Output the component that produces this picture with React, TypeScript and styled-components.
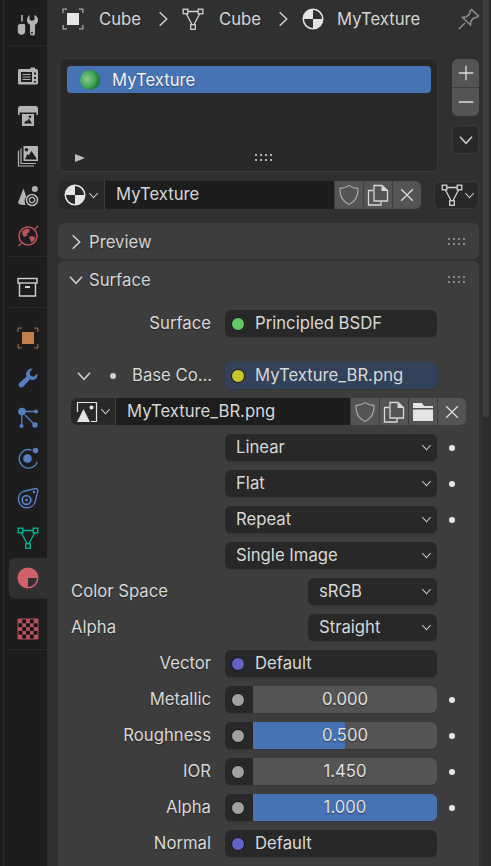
import styled, { createGlobalStyle } from "styled-components";
import type { ReactNode } from "react";

const GlobalStyle = createGlobalStyle`
  html, body { margin: 0; padding: 0; background: #303030; }
  body { font-family: Inter, "Noto Sans", sans-serif; color: #e0e0e0; }
`;

const FONT_SIZE = "16.7px";

const Screen = styled.div`
  display: flex;
  width: 491px;
  height: 866px;
  overflow: hidden;
  background: #303030;
`;

/* left tab column */
const Sidebar = styled.nav`
  width: 47px;
  flex: none;
  box-sizing: border-box;
  padding: 5px 0 0 9px;
  background: #1d1d1d;
  box-shadow: inset 3px 0 0 #1d1d1d, inset 4px 0 0 #2b2b2b;
  display: flex;
  flex-direction: column;
`;
const TabGroup = styled.div`
  display: flex;
  flex-direction: column;
  border-bottom: 1px solid #282828;
  margin-bottom: 10px;
`;
const Tab = styled.div<{ $active?: boolean }>`
  height: 40px;
  display: flex;
  align-items: center;
  justify-content: center;
  border-radius: 5px 0 0 5px;
  background: ${(p) => (p.$active ? "#303030" : "transparent")};
`;

const Main = styled.main`
  width: 436px;
  flex: none;
  padding-left: 11px;
  box-sizing: border-box;
  display: flex;
  flex-direction: column;
  & > * { flex: none; }
`;

/* breadcrumb */
const Header = styled.header`
  height: 38px;
  display: flex;
  align-items: center;
  padding-left: 4px;
  font-size: ${FONT_SIZE};
  color: #d4d4d4;
`;
const Crumb = styled.span`
  margin-left: 15px;
  width: 56px;
`;
const CrumbChevron = styled.span`
  display: flex;
  width: 27px;
`;
const CrumbEnd = styled.span`
  margin-left: 13px;
  flex: 1;
`;
const PinSlot = styled.span`
  display: flex;
  margin-right: 3px;
`;

/* material slots */
const SlotRow = styled.section`
  margin-top: 20px;
  display: flex;
`;
const SlotList = styled.div`
  position: relative;
  width: 379px;
  height: 114px;
  margin-left: 1px;
  box-sizing: border-box;
  padding: 7px 6px 7px 7px;
  background: #282828;
  border: 1px solid #3a3a3a;
  border-radius: 6px;
`;
const SlotItem = styled.div`
  height: 27px;
  display: flex;
  align-items: center;
  gap: 12px;
  padding-left: 13px;
  background: #4772b3;
  border-radius: 4px;
  font-size: ${FONT_SIZE};
  color: #f2f2f2;
  text-shadow: 0 1px 1px rgba(0, 0, 0, 0.35);
`;
const Sphere = styled.span`
  width: 20px;
  height: 20px;
  border-radius: 50%;
  background: radial-gradient(circle at 36% 45%, #90c594 0, #3fa552 48%, #11692b 78%, #0a3417 100%);
`;
const ExpandMark = styled.span`
  position: absolute;
  left: 15px;
  bottom: 9px;
  width: 0;
  height: 0;
  border-left: 10px solid #bdbdbd;
  border-top: 4px solid transparent;
  border-bottom: 4px solid transparent;
`;
const GripHolder = styled.span`
  position: absolute;
  left: 195px;
  bottom: 9px;
  display: flex;
`;
const SlotTools = styled.div`
  margin-left: 14px;
  width: 27px;
  display: flex;
  flex-direction: column;
`;
const PlusMinus = styled.div`
  height: 57px;
  margin-top: 1px;
  border-radius: 6px;
  overflow: hidden;
  background: #545454;
  display: flex;
  flex-direction: column;
`;
const PlusMinusCell = styled.span`
  flex: 1;
  display: flex;
  align-items: center;
  justify-content: center;
  & + & { border-top: 1px solid #3d3d3d; }
`;
const SpecialsButton = styled.div`
  height: 29px;
  margin-top: 9px;
  background: #282828;
  border: 1px solid #3a3a3a;
  border-radius: 6px;
  box-sizing: border-box;
  display: flex;
  align-items: center;
  justify-content: center;
`;

/* ID selector rows */
const IdRow = styled.section`
  margin-top: 9px;
  margin-left: 1px;
  display: flex;
  height: 28px;
`;
const IdField = styled.div<{ $width: number }>`
  width: ${(p) => p.$width}px;
  height: 100%;
  flex: none;
  display: flex;
  border-radius: 6px;
  overflow: hidden;
`;
const IdIcon = styled.span<{ $width: number }>`
  width: ${(p) => p.$width}px;
  flex: none;
  box-sizing: border-box;
  display: flex;
  align-items: center;
  gap: 2px;
  padding-left: 5px;
  background: #282828;
  border-right: 1px solid #3d3d3d;
`;
const IdInput = styled.span`
  flex: 1;
  display: flex;
  align-items: center;
  padding: 0 0 2px 11px;
  background: #1d1d1d;
  font-size: ${FONT_SIZE};
  color: #d6d6d6;
`;
const IdButton = styled.span`
  width: 29px;
  flex: none;
  box-sizing: border-box;
  display: flex;
  align-items: center;
  justify-content: center;
  background: #545454;
  border-left: 1px solid #3d3d3d;
`;
const MeshSelect = styled.div`
  margin-left: 13px;
  width: 45px;
  box-sizing: border-box;
  display: flex;
  align-items: center;
  gap: 1px;
  padding-left: 6px;
  background: #282828;
  border: 1px solid #3a3a3a;
  border-radius: 6px;
`;

/* panels */
const PanelStack = styled.div`
  margin-top: 14px;
  width: 421px;
  display: flex;
  flex-direction: column;
  gap: 2px;
`;
const Panel = styled.section`
  background: #3d3d3d;
  border-radius: 6px;
`;
const PanelHeader = styled.div<{ $height: number; $drop?: number }>`
  height: ${(p) => p.$height}px;
  box-sizing: border-box;
  display: flex;
  align-items: center;
  padding: ${(p) => p.$drop ?? 0}px 14px 0 10px;
  font-size: ${FONT_SIZE};
  color: #d4d4d4;
  text-shadow: 0 1px 1px rgba(0, 0, 0, 0.4);
`;
const PanelTitle = styled.span`
  flex: 1;
  margin-left: 5px;
`;
const PanelBody = styled.div`
  padding: 11px 0 20px 13px;
  display: flex;
  flex-direction: column;
  gap: 9px;
`;

const Row = styled.div<{ $top?: number }>`
  display: flex;
  align-items: center;
  height: 27px;
  margin-top: ${(p) => p.$top ?? 0}px;
`;
const Label = styled.span<{ $width?: number }>`
  width: ${(p) => p.$width ?? 140}px;
  flex: none;
  padding-bottom: 2px;
  text-align: right;
  font-size: ${FONT_SIZE};
  color: #d8d8d8;
  text-shadow: 0 1px 1px rgba(0, 0, 0, 0.45);
  white-space: nowrap;
`;
const PlainLabel = styled.span`
  width: 237px;
  flex: none;
  padding-bottom: 2px;
  font-size: ${FONT_SIZE};
  color: #d8d8d8;
  text-shadow: 0 1px 1px rgba(0, 0, 0, 0.45);
`;
const FieldBase = styled.div<{ $width?: number; $left?: number }>`
  width: ${(p) => p.$width ?? 212}px;
  margin-left: ${(p) => p.$left ?? 14}px;
  height: 27px;
  flex: none;
  box-sizing: border-box;
  display: flex;
  align-items: center;
  border-radius: 6px;
  font-size: ${FONT_SIZE};
  color: #d8d8d8;
  box-shadow: 0 1px 0 #353535;
`;
const FieldText = styled.span`
  padding-bottom: 2px;
`;
const SocketField = styled(FieldBase)<{ $linked?: boolean }>`
  background: ${(p) => (p.$linked ? "#33415a" : "#282828")};
  padding-left: 6px;
  gap: 10px;
`;
const Socket = styled.span<{ $color: string }>`
  width: 14px;
  height: 14px;
  flex: none;
  box-sizing: border-box;
  border-radius: 50%;
  background: ${(p) => p.$color};
  border: 1.5px solid #141414;
`;
const SelectField = styled(FieldBase)`
  background: #282828;
  padding: 0 5px 0 11px;
  justify-content: space-between;
`;
const SliderField = styled(FieldBase)`
  overflow: hidden;
  background: #282828;
  padding-left: 6px;
`;
const SliderTrack = styled.div`
  position: relative;
  height: 100%;
  width: 184px;
  margin-left: 8px;
  background: #545454;
  display: flex;
  align-items: center;
  justify-content: center;
`;
const SliderFill = styled.span`
  position: absolute;
  left: 0;
  top: 0;
  bottom: 0;
  background: #4772b3;
`;
const SliderValue = styled.span`
  position: relative;
  padding-bottom: 2px;
  text-shadow: 0 1px 1px rgba(0, 0, 0, 0.5);
  color: #e0e0e0;
`;
const Dot = styled.span`
  width: 6px;
  height: 6px;
  flex: none;
  border-radius: 50%;
  margin-left: 12px;
  background: #e6e6e6;
`;
const BaseColorLead = styled.span`
  width: 61px;
  flex: none;
  display: flex;
  align-items: center;
  padding-left: 5px;
  box-sizing: border-box;
  gap: 18px;
`;
const SmallDot = styled.span`
  width: 6px;
  height: 6px;
  border-radius: 50%;
  background: #d0d0d0;
`;
const ImageRowWrap = styled(IdRow)`
  margin: 0;
  height: 27px;
`;

/* scrollbar at the right edge */
const ScrollTrack = styled.div`
  width: 8px;
  flex: none;
  background: #2c2c2c;
`;
const ScrollThumb = styled.div`
  width: 6px;
  height: 417px;
  background: #3d3d3d;
  border-radius: 0 0 3px 3px;
`;

type IconProps = { children: ReactNode; size?: number; color?: string };
const Icon = ({ children, size = 22, color = "#b4b4b4" }: IconProps) => (
  <svg width={size} height={size} viewBox="0 0 22 22" fill="none" stroke={color} style={{ color, display: "block", flex: "none" }}>
    {children}
  </svg>
);

const Chevron = ({ dir = "down", size = 12, color = "#d0d0d0" }: { dir?: "down" | "right"; size?: number; color?: string }) => (
  <svg width={size} height={size} viewBox="0 0 12 12" fill="none" stroke={color} strokeWidth={1.1} style={{ display: "block", flex: "none" }}>
    <path d={dir === "down" ? "M1.5 3.5 6 8.5l4.5-5" : "M3.5 1 8.8 6l-5.3 5"} />
  </svg>
);

const Grip = ({ color = "#8a8a8a" }: { color?: string }) => (
  <svg width="17" height="8" viewBox="0 0 17 8" fill={color} style={{ display: "block" }}>
    {[1, 6, 11, 16].map((x) => (
      <g key={x}>
        <rect x={x - 1} y="0" width="2" height="2" />
        <rect x={x - 1} y="5" width="2" height="2" />
      </g>
    ))}
  </svg>
);

const ToolGlyph = () => (
  <Icon>
    <path d="M5 1v6.500" strokeWidth={1.6} />
    <path fill="currentColor" stroke="none" d="M2.500 10h5l.7 1.500V17a3.700 3.700 0 0 1-7.400 0v-5.500z" />
    <path fill="currentColor" stroke="none" fillRule="evenodd" d="M12.500 1v4.500l2.500 1.500 2.500-1.500V1c2 .8 3.500 2.700 3.500 5 0 2.200-1.300 4-3 4.800V19a2.500 2.500 0 0 1-5 0v-8.200c-1.800-.8-3-2.600-3-4.800 0-2.300 1.500-4.200 2.500-5zM14 18.700a1 1 0 1 0 2 0 1 1 0 0 0-2 0z" />
  </Icon>
);
const RenderGlyph = () => (
  <Icon>
    <path fill="currentColor" stroke="none" fillRule="evenodd" d="M2.500 4H13l1-1.500h4V4h1.500A1.500 1.500 0 0 1 21 5.500V18a1.500 1.500 0 0 1-1.500 1.500h-17A1.500 1.500 0 0 1 1 18V5.500A1.500 1.500 0 0 1 2.500 4zM4 7v10h11V7zM17 7.500v2h2v-2zM17 12v2h2v-2zM17 16v1.500h2V16z" />
    <path d="M5.500 9.500h8M5.500 12h8M5.500 14.500h8" strokeWidth={1.2} />
  </Icon>
);
const OutputGlyph = () => (
  <Icon>
    <path fill="currentColor" stroke="none" d="M3.500 1h15A2.500 2.500 0 0 1 21 3.500V10h-1.500V7.500h-17V10H1V3.500A2.500 2.500 0 0 1 3.500 1z" />
    <path fill="currentColor" stroke="none" fillRule="evenodd" d="M5 9h12v12H5zM7 18.500h8l-3-5-2 3-1-1.200zM13 10.500a1.300 1.300 0 1 0 0 2.600 1.300 1.300 0 0 0 0-2.600z" />
  </Icon>
);
const LayersGlyph = () => (
  <Icon>
    <path d="M1.500 5.500V21h15.500" strokeWidth={1.2} />
    <path d="M4 3.500V18.500h15" strokeWidth={1.2} />
    <path fill="currentColor" stroke="none" fillRule="evenodd" d="M6.500 1H21v15H6.500zM8 14.500h11.500v-1L14.500 6l-3 4.500-1.200-1.500zM9.500 3a1.700 1.700 0 1 0 0 3.400A1.700 1.700 0 0 0 9.500 3z" />
  </Icon>
);
const SceneGlyph = () => (
  <Icon>
    <path fill="currentColor" stroke="none" d="M6.500 3.500 1 17.500c0 1.600 2.500 2.500 5.500 2.500.8 0 1.500 0 2.200-.2a8 8 0 0 1 .5-8.300z" />
    <circle cx="17.800" cy="4" r="3" fill="currentColor" stroke="none" />
    <circle cx="15" cy="15" r="5.500" strokeWidth={1.6} />
    <circle cx="15" cy="15" r="2.600" strokeWidth={1.2} />
  </Icon>
);
const WorldGlyph = () => (
  <Icon color="#b5525a">
    <circle cx="11" cy="11" r="9" strokeWidth={1.6} />
    <path d="M1.500 21 4 18.500M18 4l3-3" strokeWidth={1.3} />
    <path fill="currentColor" stroke="none" d="M5 6.500 9 3.500l4 1-1 3-2 1 .5 2-3 1.500-2-2zM12 12l3-1 3 1-.5 3-3 2.500-1.500-3z" />
  </Icon>
);
const CollectionGlyph = () => (
  <Icon color="#d2d2d2">
    <rect x="1" y="2.500" width="19" height="4.500" strokeWidth={1.4} />
    <path d="M2.500 7v13h16V7" strokeWidth={1.4} />
    <rect x="8" y="10" width="5" height="2" fill="currentColor" stroke="none" />
  </Icon>
);
const ObjectGlyph = ({ color = "#c27f4d", corner = "#8d6040" }: { color?: string; corner?: string }) => (
  <Icon color={color}>
    <rect x="5" y="5" width="12" height="12" fill="currentColor" stroke="none" />
    <path d="M1 5V1.200h4M17 1.200h3.800V5M20.800 17v3.800H17M5 20.800H1.200V17" stroke={corner} strokeWidth={1.3} />
  </Icon>
);
const WrenchGlyph = () => (
  <Icon color="#5680c2">
    <path fill="currentColor" stroke="none" d="M20.500 6.500c.4 2.700-.8 5-3 6-1.500.7-3.200.5-4.500-.3l-6.500 7.200c-1.100 1.200-2.900 1.400-4 .4-1.200-1.100-1.100-2.900 0-4l7.200-6.300c-.7-1.500-.8-3.200 0-4.800 1-2.200 3.400-3.500 6-3.300L12.500 5.500l1 3.300 3.300 1z" />
  </Icon>
);
const ParticlesGlyph = () => (
  <Icon color="#5680c2">
    <circle cx="5" cy="4.500" r="3.800" fill="currentColor" stroke="none" />
    <circle cx="19" cy="4.500" r="2" fill="currentColor" stroke="none" />
    <circle cx="4.500" cy="19" r="2" fill="currentColor" stroke="none" />
    <circle cx="18" cy="18" r="2.700" fill="currentColor" stroke="none" />
    <path d="M8 4.500h10M4.800 8v10M8 8l9 9" strokeWidth={1.3} />
  </Icon>
);
const PhysicsGlyph = () => (
  <Icon color="#5680c2">
    <circle cx="10.500" cy="11.500" r="4.300" fill="currentColor" stroke="none" />
    <circle cx="18.500" cy="3.500" r="2.800" fill="currentColor" stroke="none" />
    <path d="M14.500 3a9.300 9.300 0 1 0 5.800 12" strokeWidth={1.4} />
  </Icon>
);
const ConstraintGlyph = () => (
  <Icon color="#5680c2">
    <path d="M18.500 1.500c1.500 0 2.500 1.200 2.300 2.800l-2.500 10c-1 4-4.500 6.500-8.300 6.500a8.700 8.700 0 0 1-4-16.300L16.500 2c.7-.3 1.300-.5 2-.5z" strokeWidth={1.4} />
    <circle cx="9.500" cy="13" r="4.300" strokeWidth={1.8} />
    <circle cx="9.500" cy="13" r="1.400" fill="currentColor" stroke="none" />
    <circle cx="17" cy="5" r="1.300" fill="currentColor" stroke="none" />
  </Icon>
);
const MeshGlyph = ({ color = "#d2d2d2" }: { color?: string }) => (
  <Icon color={color}>
    <path d="M5.800 3.500h10.400M4.300 5.800l5.800 10.900M17.700 5.800l-5.800 10.900" strokeWidth={1.3} />
    <rect x="1.200" y="1.200" width="4.600" height="4.600" strokeWidth={1.3} />
    <rect x="16.200" y="1.200" width="4.600" height="4.600" strokeWidth={1.3} />
    <rect x="8.700" y="16.700" width="4.600" height="4.600" strokeWidth={1.3} />
  </Icon>
);
const MaterialGlyph = () => (
  <Icon color="#e4e4e4">
    <path fill="currentColor" stroke="none" fillRule="evenodd" d="M11 .5a10.500 10.500 0 1 1 0 21 10.500 10.500 0 0 1 0-21zM11 2v9h9a9 9 0 0 0-9-9zM11 11H2a9 9 0 0 0 9 9z" />
  </Icon>
);
const MaterialTabGlyph = () => (
  <Icon color="#d0606a">
    <path fill="currentColor" stroke="none" fillRule="evenodd" d="M11 .5a10.500 10.500 0 1 1 0 21 10.500 10.500 0 0 1 0-21zM11 11v9a9 9 0 0 0 9-9z" />
  </Icon>
);
const TextureGlyph = () => {
  const cells: ReactNode[] = [];
  for (let r = 0; r < 5; r++) {
    for (let c = 0; c < 5; c++) {
      if ((r + c) % 2 === 1) cells.push(<rect key={`${r}-${c}`} x={1.5 + c * 3.8} y={1.5 + r * 3.8} width="3.800" height="3.800" fill="#141414" stroke="none" />);
    }
  }
  return (
    <Icon color="#b5525a">
      <rect x=".5" y=".5" width="21" height="21" rx="1" fill="#b5525a" stroke="none" />
      {cells}
    </Icon>
  );
};
const PinGlyph = () => (
  <Icon color="#8f8f8f">
    <path d="M1 21l6-6" strokeWidth={1.5} />
    <path d="M13.500 1.500 20.500 8l-2 1.500-3 .5-2.500 3-.5 4L4.500 9.500l4-.8 3-2.500.5-3z" strokeWidth={1.5} />
  </Icon>
);
const ShieldGlyph = () => (
  <Icon color="#a2a2a2">
    <path d="M11 1.500c2.500 1.800 5.500 2.700 9 3 .3 7.500-2.500 13-9 16-6.500-3-9.300-8.500-9-16 3.500-.3 6.500-1.200 9-3z" strokeWidth={1.3} />
  </Icon>
);
const CopyGlyph = () => (
  <Icon color="#d8d8d8">
    <path d="M6 6.500H1.500v14.500H14V17" strokeWidth={1.3} />
    <path d="M7 1.500h8l5.500 5v10.500H7z" strokeWidth={1.3} />
    <path fill="currentColor" stroke="none" d="M14.500 1.500l6 5.500h-6z" />
  </Icon>
);
const CloseGlyph = () => (
  <Icon color="#dcdcdc" size={16}>
    <path d="M3 3l16 16M19 3 3 19" strokeWidth={1.8} />
  </Icon>
);
const FolderGlyph = () => (
  <Icon color="#e4e4e4">
    <path fill="currentColor" stroke="none" d="M1 2h9l2 3h9v2H1zM1 8.500h20V20H1z" />
  </Icon>
);
const ImageGlyph = () => (
  <Icon color="#e4e4e4">
    <path d="M1.500 11V1.500h19v19H15" strokeWidth={1.2} />
    <path fill="currentColor" stroke="none" d="M7.500 8 14 21H1zM15.500 4.500a2 2 0 1 1 0 4 2 2 0 0 1 0-4z" />
  </Icon>
);
const PlusGlyph = () => (
  <Icon color="#dcdcdc" size={16}>
    <path d="M11 1v20M1 11h20" strokeWidth={1.8} />
  </Icon>
);
const MinusGlyph = () => (
  <Icon color="#dcdcdc" size={16}>
    <path d="M1 11h20" strokeWidth={1.8} />
  </Icon>
);

const BLUE_SOCKET = "#6363c7";
const GRAY_SOCKET = "#a1a1a1";

const selects = [
  { label: "Linear", dot: true },
  { label: "Flat", dot: true },
  { label: "Repeat", dot: true },
  { label: "Single Image", dot: false },
];
const sliders = [
  { label: "Metallic", value: "0.000", fill: 0 },
  { label: "Roughness", value: "0.500", fill: 50 },
  { label: "IOR", value: "1.450", fill: 0 },
  { label: "Alpha", value: "1.000", fill: 100 },
];

export default function App() {
  return (
    <Screen>
      <GlobalStyle />
      <Sidebar>
        <TabGroup>
          <Tab><ToolGlyph /></Tab>
        </TabGroup>
        <TabGroup>
          <Tab><RenderGlyph /></Tab>
          <Tab><OutputGlyph /></Tab>
          <Tab><LayersGlyph /></Tab>
          <Tab><SceneGlyph /></Tab>
          <Tab><WorldGlyph /></Tab>
        </TabGroup>
        <TabGroup>
          <Tab><CollectionGlyph /></Tab>
        </TabGroup>
        <TabGroup>
          <Tab><ObjectGlyph /></Tab>
          <Tab><WrenchGlyph /></Tab>
          <Tab><ParticlesGlyph /></Tab>
          <Tab><PhysicsGlyph /></Tab>
          <Tab><ConstraintGlyph /></Tab>
          <Tab><MeshGlyph color="#00b894" /></Tab>
          <Tab $active><MaterialTabGlyph /></Tab>
        </TabGroup>
        <TabGroup>
          <Tab><TextureGlyph /></Tab>
        </TabGroup>
      </Sidebar>
      <Main>
        <Header>
          <ObjectGlyph color="#e6e6e6" corner="#a8a8a8" />
          <Crumb>Cube</Crumb>
          <CrumbChevron><Chevron dir="right" size={16} /></CrumbChevron>
          <MeshGlyph />
          <Crumb>Cube</Crumb>
          <CrumbChevron><Chevron dir="right" size={16} /></CrumbChevron>
          <MaterialGlyph />
          <CrumbEnd>MyTexture</CrumbEnd>
          <PinSlot><PinGlyph /></PinSlot>
        </Header>
        <SlotRow>
          <SlotList>
            <SlotItem><Sphere />MyTexture</SlotItem>
            <ExpandMark />
            <GripHolder><Grip color="#b0b0b0" /></GripHolder>
          </SlotList>
          <SlotTools>
            <PlusMinus>
              <PlusMinusCell><PlusGlyph /></PlusMinusCell>
              <PlusMinusCell><MinusGlyph /></PlusMinusCell>
            </PlusMinus>
            <SpecialsButton><Chevron size={16} /></SpecialsButton>
          </SlotTools>
        </SlotRow>
        <IdRow>
          <IdField $width={362}>
            <IdIcon $width={46}><MaterialGlyph /><Chevron size={11} /></IdIcon>
            <IdInput>MyTexture</IdInput>
            <IdButton><ShieldGlyph /></IdButton>
            <IdButton><CopyGlyph /></IdButton>
            <IdButton><CloseGlyph /></IdButton>
          </IdField>
          <MeshSelect><MeshGlyph /><Chevron size={11} /></MeshSelect>
        </IdRow>
        <PanelStack>
          <Panel>
            <PanelHeader $height={36} $drop={2}>
              <Chevron dir="right" size={16} />
              <PanelTitle>Preview</PanelTitle>
              <Grip />
            </PanelHeader>
          </Panel>
          <Panel>
            <PanelHeader $height={38}>
              <Chevron size={16} />
              <PanelTitle>Surface</PanelTitle>
              <Grip />
            </PanelHeader>
            <PanelBody>
              <Row>
                <Label>Surface</Label>
                <SocketField><Socket $color="#63c763" /><FieldText>Principled BSDF</FieldText></SocketField>
              </Row>
              <Row $top={16}>
                <BaseColorLead><Chevron size={16} /><SmallDot /></BaseColorLead>
                <Label $width={79}>Base Co...</Label>
                <SocketField $linked><Socket $color="#c7c729" /><FieldText>MyTexture_BR.png</FieldText></SocketField>
              </Row>
              <ImageRowWrap>
                <IdField $width={395}>
                  <IdIcon $width={45}><ImageGlyph /><Chevron size={11} /></IdIcon>
                  <IdInput>MyTexture_BR.png</IdInput>
                  <IdButton><ShieldGlyph /></IdButton>
                  <IdButton><CopyGlyph /></IdButton>
                  <IdButton><FolderGlyph /></IdButton>
                  <IdButton><CloseGlyph /></IdButton>
                </IdField>
              </ImageRowWrap>
              {selects.map((s) => (
                <Row key={s.label}>
                  <SelectField $left={154}><FieldText>{s.label}</FieldText><Chevron size={11} /></SelectField>
                  {s.dot && <Dot />}
                </Row>
              ))}
              <Row>
                <PlainLabel>Color Space</PlainLabel>
                <SelectField $width={129} $left={0}><FieldText>sRGB</FieldText><Chevron size={11} /></SelectField>
              </Row>
              <Row>
                <PlainLabel>Alpha</PlainLabel>
                <SelectField $width={129} $left={0}><FieldText>Straight</FieldText><Chevron size={11} /></SelectField>
              </Row>
              <Row>
                <Label>Vector</Label>
                <SocketField><Socket $color={BLUE_SOCKET} /><FieldText>Default</FieldText></SocketField>
              </Row>
              {sliders.map((s) => (
                <Row key={s.label}>
                  <Label>{s.label}</Label>
                  <SliderField>
                    <Socket $color={GRAY_SOCKET} />
                    <SliderTrack>
                      <SliderFill style={{ width: `${s.fill}%` }} />
                      <SliderValue>{s.value}</SliderValue>
                    </SliderTrack>
                  </SliderField>
                  <Dot />
                </Row>
              ))}
              <Row>
                <Label>Normal</Label>
                <SocketField><Socket $color={BLUE_SOCKET} /><FieldText>Default</FieldText></SocketField>
              </Row>
            </PanelBody>
          </Panel>
        </PanelStack>
      </Main>
      <ScrollTrack><ScrollThumb /></ScrollTrack>
    </Screen>
  );
}
